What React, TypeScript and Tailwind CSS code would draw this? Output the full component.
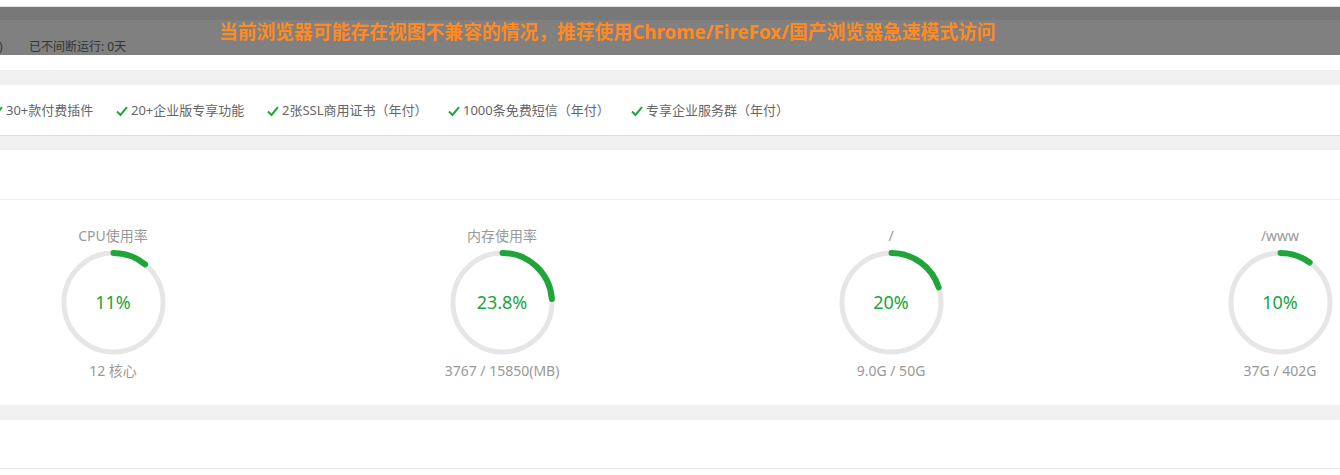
import React from "react";

const FONT = '"Noto Sans", "Noto Sans CJK SC", sans-serif';

function Check() {
  return (
    <svg width="12" height="12" viewBox="0 0 12 12" className="shrink-0">
      <path d="M1 6.5 L4.5 10 L11 2.2" fill="none" stroke="#20a53a" strokeWidth="2" />
    </svg>
  );
}

const features = [
  { t: "30+款付费插件", w: "w-[125px]" },
  { t: "20+企业版专享功能", w: "w-[151px]" },
  { t: "2张SSL商用证书（年付）", w: "w-[181px]" },
  { t: "1000条免费短信（年付）", w: "w-[183px]" },
  { t: "专享企业服务群（年付）", w: "w-[200px]" },
];

const gauges = [
  { title: "CPU使用率", pct: 11, label: "11%", sub: "12 核心" },
  { title: "内存使用率", pct: 23.8, label: "23.8%", sub: "3767 / 15850(MB)" },
  { title: "/", pct: 20, label: "20%", sub: "9.0G / 50G" },
  { title: "/www", pct: 10, label: "10%", sub: "37G / 402G" },
];

function Gauge({ title, pct, label, sub }: { title: string; pct: number; label: string; sub: string }) {
  const r = 49.5;
  const c = 2 * Math.PI * r;
  return (
    <div className="flex w-[110px] flex-col items-center">
      <div className="h-[20px] text-[14px] leading-[20px] text-[#999]">{title}</div>
      <div className="relative mt-[4px] h-[105px] w-[105px]">
        <svg width="105" height="105" viewBox="0 0 105 105">
          <circle cx="52.5" cy="52.5" r={r} fill="none" stroke="#e6e6e6" strokeWidth="5" />
          <circle
            cx="52.5"
            cy="52.5"
            r={r}
            fill="none"
            stroke="#20a53a"
            strokeWidth="6"
            strokeLinecap="round"
            strokeDasharray={`${(c * pct) / 100} ${c}`}
            transform="rotate(-90 52.5 52.5)"
          />
        </svg>
        <div className="absolute inset-0 flex items-center justify-center text-[18px] text-[#20a53a]">
          {label}
        </div>
      </div>
      <div className="mt-[6px] h-[20px] whitespace-nowrap text-[14px] leading-[20px] text-[#999]">{sub}</div>
    </div>
  );
}

export default function App() {
  return (
    <div className="h-[475px] w-[1340px] overflow-hidden bg-white" style={{ fontFamily: FONT }}>
      <div className="h-[6px] bg-white" />
      <header className="relative h-[49px] border-t border-[#e4e4e4] bg-[#808080]">
        <div className="h-[13px] bg-[#787878]" />
        <div className="flex pt-[19px] text-[12px] leading-[16px] text-[#353535]">
          <span className="-ml-[1px] w-[30px]">)</span>
          <span>已不间断运行: 0天</span>
        </div>
        <div className="absolute left-[219px] top-[13px] whitespace-nowrap text-[18.8px] font-bold leading-[24px] text-[#ff8a22]">
          当前浏览器可能存在视图不兼容的情况，推荐使用Chrome/FireFox/国产浏览器急速模式访问
        </div>
      </header>
      <div className="h-[15px] bg-white" />
      <div className="h-[15px] bg-[#f0f0f0]" />
      <div className="flex h-[51px] items-center border-b border-[#dddddd] bg-white pt-[2px]">
        <div className="-ml-[9px] flex items-center">
          {features.map((f) => (
            <div key={f.t} className={`flex items-center gap-[3px] whitespace-nowrap ${f.w}`}>
              <Check />
              <span className="text-[13px] text-[#666]">{f.t}</span>
            </div>
          ))}
        </div>
      </div>
      <div className="h-[14px] bg-[#f0f0f0]" />
      <div className="h-[50px] border-b border-[#eeeeee] bg-white" />
      <div className="flex h-[205px] gap-[279px] bg-white pl-[58px] pt-[26px]">
        {gauges.map((g) => (
          <Gauge key={g.title} {...g} />
        ))}
      </div>
      <div className="h-[15px] bg-[#f0f0f0]" />
      <div className="h-[49px] border-b border-[#e8e8e8] bg-white" />
    </div>
  );
}
